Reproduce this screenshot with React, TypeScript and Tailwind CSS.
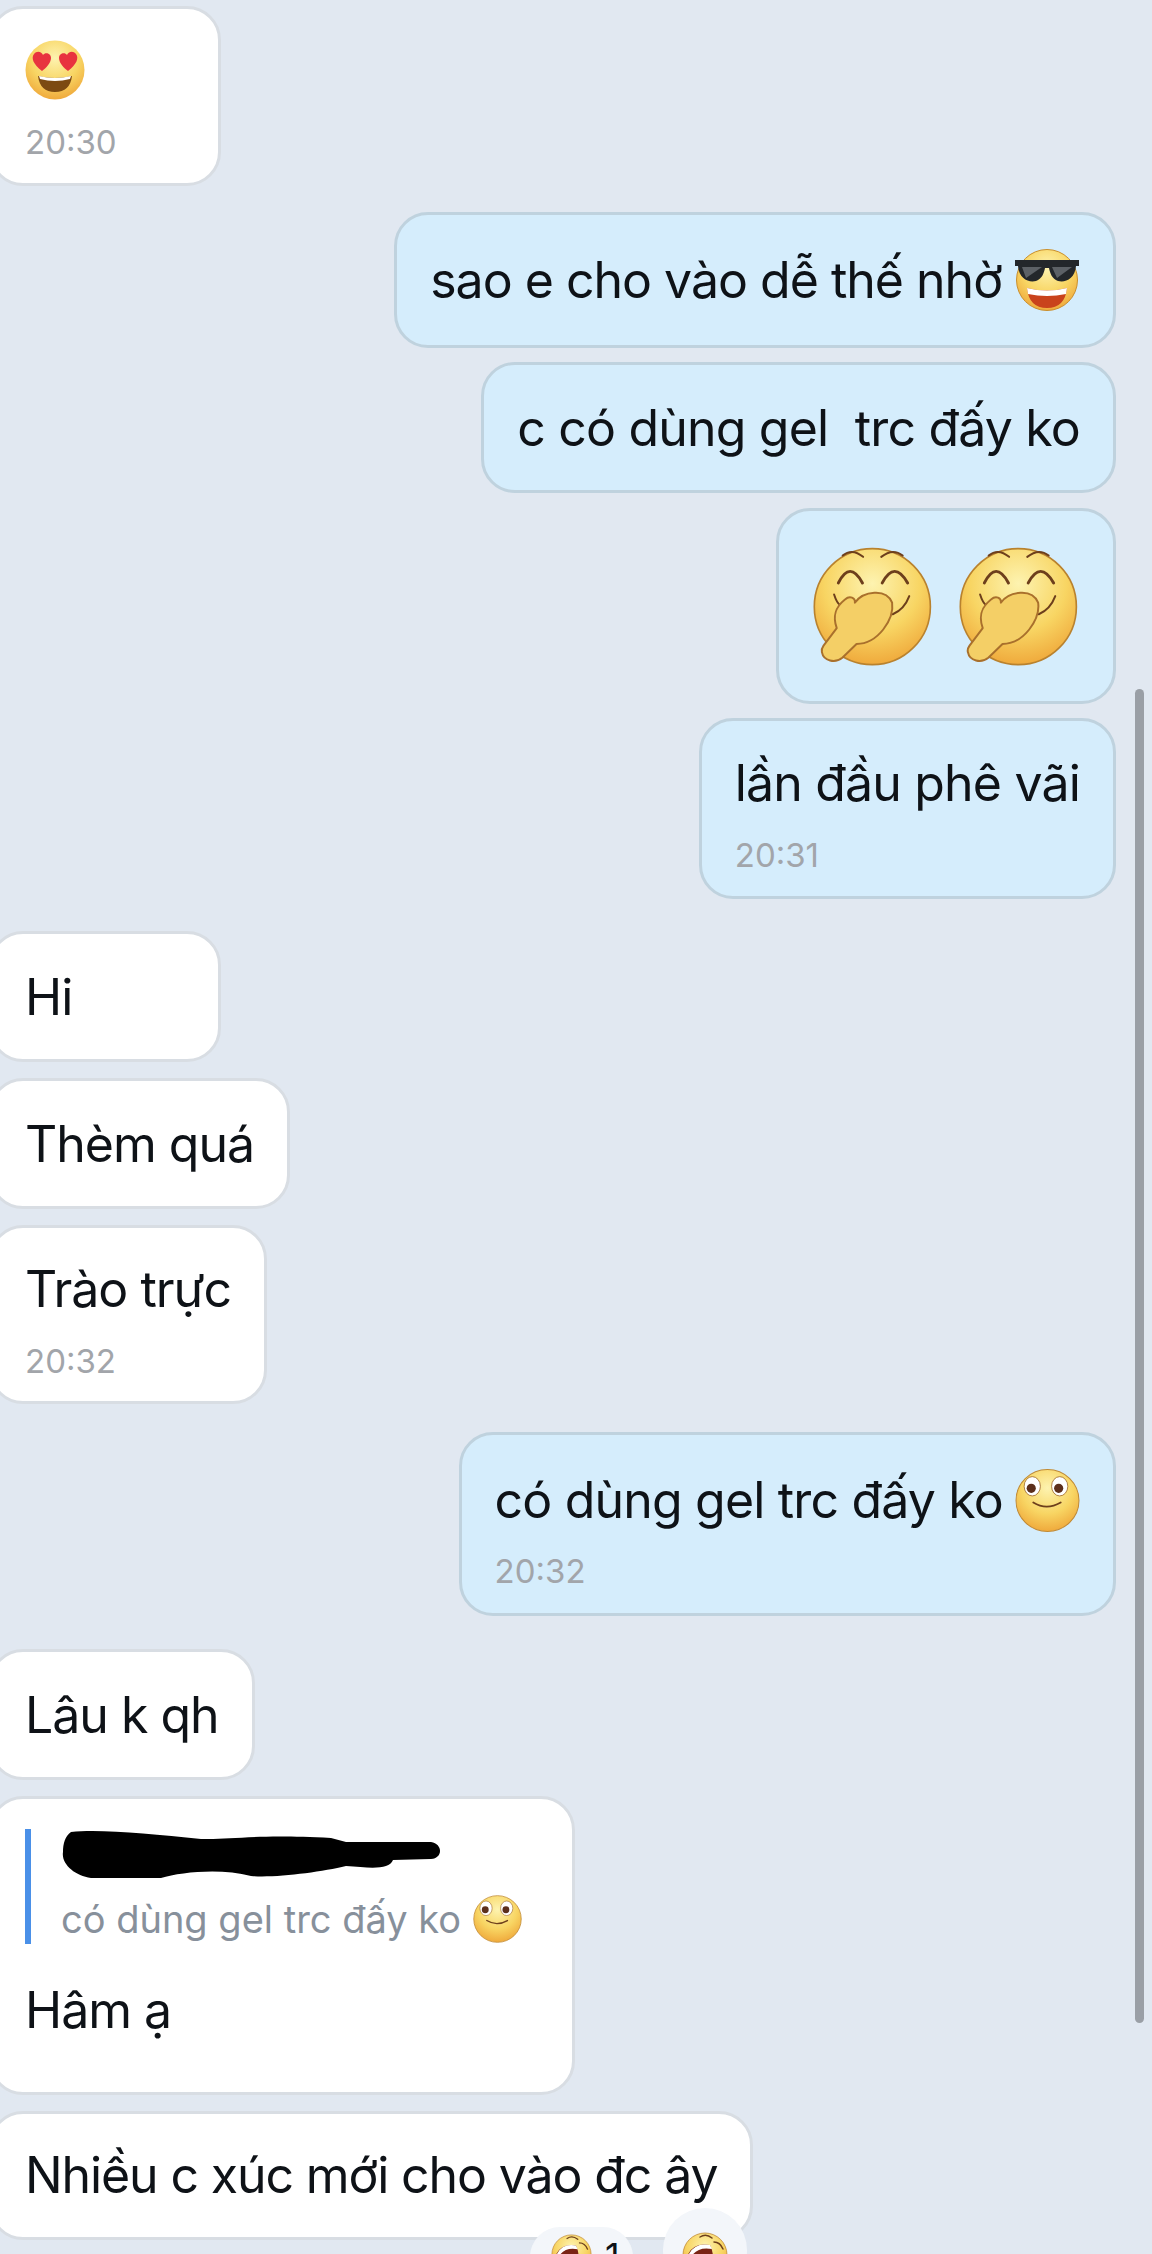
import React from 'react';

function FaceDefs({ id }: { id: string }) {
  return (
    <defs>
      <radialGradient id={id} cx="50%" cy="30%" r="75%">
        <stop offset="0%" stopColor="#fdf3b0" />
        <stop offset="55%" stopColor="#f8d563" />
        <stop offset="100%" stopColor="#eea235" />
      </radialGradient>
    </defs>
  );
}

function HeartEyes() {
  return (
    <svg viewBox="0 0 60 60" className="w-[60px] h-[60px]">
      <FaceDefs id="heartFace" />
      <circle cx="30" cy="30" r="29.5" fill="url(#heartFace)" />
      <path d="M13 36 Q30 40 47 36 Q45 52 30 52 Q15 52 13 36Z" fill="#7c4a12" />
      <path d="M14 36 Q30 40 46 36 L45 39 Q30 43 15 39Z" fill="#fff" />
      <path d="M17 31 C8 24 6 18 9 14 C12 10 17 12 18 15 C20 12 26 13 26 18 C26 23 21 28 17 31Z" fill="#e8333f" />
      <path d="M43 31 C39 28 34 23 34 18 C34 13 40 12 42 15 C43 12 48 10 51 14 C54 18 52 24 43 31Z" fill="#e8333f" />
    </svg>
  );
}

function CoolFace() {
  return (
    <svg viewBox="0 0 66 66" className="w-[66px] h-[66px] shrink-0">
      <FaceDefs id="coolFace" />
      <circle cx="33" cy="33" r="30.5" fill="url(#coolFace)" stroke="#c98f2e" strokeWidth="1" />
      <path d="M13 41 Q33 46 53 41 Q51 61 33 61 Q15 61 13 41Z" fill="#c9431c" />
      <path d="M13 41 Q33 46 53 41 L52 47 Q33 51 14 47Z" fill="#fff" />
      <path d="M1 13 H65 V19 H62 C61 32 51 36 44 34 C38 32 36 26 35 21 H31 C30 26 28 32 22 34 C15 36 5 32 4 19 H1Z" fill="#23272b" />
      <path d="M8 20 H28 L12 31Z M38 20 H58 L43 31Z" fill="#5c6166" />
    </svg>
  );
}

function CoverFace() {
  return (
    <svg viewBox="90 40 370 370" className="w-[122px] h-[122px] shrink-0">
      <FaceDefs id="coverFace" />
      <circle cx="273" cy="227" r="176" fill="url(#coverFace)" stroke="#b9822e" strokeWidth="5" />
      <g fill="none" stroke="#6d3f1c" strokeLinecap="round">
        <path d="M183 72 Q212 48 245 76" strokeWidth="6" />
        <path d="M300 76 Q335 48 365 72" strokeWidth="6" />
        <path d="M170 155 Q205 85 243 155" strokeWidth="9" />
        <path d="M303 155 Q340 85 380 155" strokeWidth="9" />
        <path d="M157 190 Q165 215 175 222" strokeWidth="6" />
        <path d="M385 195 Q370 235 335 250" strokeWidth="6" />
      </g>
      <path
        d="M125 345 L165 292 C150 250 165 225 190 205 C205 192 222 200 220 215 C245 180 315 170 333 215 C340 265 290 340 225 340 L182 382 C160 400 125 392 120 365 C118 357 120 352 125 345Z"
        fill="#f4cf66"
        stroke="#a9702c"
        strokeWidth="6"
        strokeLinejoin="round"
      />
    </svg>
  );
}

function RoundFace({ size }: { size: 'lg' | 'sm' }) {
  return (
    <svg viewBox="0 0 64 62" className={size === 'lg' ? 'w-[65px] h-[63px] shrink-0' : 'w-[49px] h-[50px] shrink-0'}>
      <FaceDefs id="roundFace" />
      <ellipse cx="32" cy="31" rx="31" ry="30.5" fill="url(#roundFace)" stroke="#c08a35" strokeWidth="1" />
      <ellipse cx="17" cy="17" rx="8" ry="9.5" fill="#fff" stroke="#a06a2a" strokeWidth="0.8" />
      <ellipse cx="44" cy="17" rx="8" ry="9.5" fill="#fff" stroke="#a06a2a" strokeWidth="0.8" />
      <circle cx="16" cy="19" r="4.5" fill="#5c2f1c" />
      <circle cx="43" cy="19" r="4.5" fill="#5c2f1c" />
      <path d="M18 33 Q31 41 45 33" fill="none" stroke="#6d3f1c" strokeWidth="1.8" strokeLinecap="round" />
    </svg>
  );
}

function LaughFace({ size }: { size: number }) {
  return (
    <svg viewBox="0 0 46 46" width={size} height={size} className="shrink-0">
      <FaceDefs id="laughFace" />
      <circle cx="23" cy="23" r="22" fill="url(#laughFace)" stroke="#c08a35" strokeWidth="0.8" />
      <path d="M18 5 Q24 1 30 6 M32 10 Q38 10 41 17" fill="none" stroke="#6d3f1c" strokeWidth="1.5" strokeLinecap="round" />
      <path d="M5 25 Q10 10 28 13 Q36 30 22 42 Q8 40 5 25Z" fill="#7a2415" />
      <path d="M6 24 Q12 10 28 13 L30 17 Q14 14 8 27Z" fill="#fff" />
    </svg>
  );
}

function Time({ children, className = 'mt-[22px]' }: { children: string; className?: string }) {
  return <div className={`${className} h-[40px] text-[33px] leading-[40px] tracking-normal text-[#a2a5aa]`}>{children}</div>;
}

function Left({ children, className = '' }: { children: React.ReactNode; className?: string }) {
  return (
    <div className={`self-start -ml-[11px] pl-[33px] pr-[33px] pt-[33px] pb-[32px] bg-white border-[3px] border-[#d8dde3] rounded-[34px] text-[#0e1217] ${className}`}>
      {children}
    </div>
  );
}

function Right({ children, className = '' }: { children: React.ReactNode; className?: string }) {
  return (
    <div className={`self-end mr-[36px] px-[33px] pt-[33px] pb-[32px] bg-[#d5edfc] border-[3px] border-[#bfd2de] rounded-[34px] text-[#0e1217] tracking-[-0.82px] ${className}`}>
      {children}
    </div>
  );
}

export default function App() {
  return (
    <div
      className="relative h-[2254px] overflow-hidden bg-[#e1e8f1] flex flex-col pt-[6px] text-[50px] leading-[60px] tracking-[-1px]"
      style={{ fontFamily: '"Inter", "Liberation Sans", sans-serif' }}
    >
      {/* Scrollbar */}
      <div className="absolute left-[1135px] top-[689px] w-[9px] h-[1334px] rounded-full bg-[#9a9fa6]" />

      <Left className="w-[232px] !pt-[31px] !pb-[21px]">
        <HeartEyes />
        <Time>20:30</Time>
      </Left>

      <Right className="mt-[26px] !pt-[32px] !pb-[32px] !tracking-[-1px]">
        <div className="flex items-center gap-[12px]">
          <span>sao e cho vào dễ thế nhờ</span>
          <CoolFace />
        </div>
      </Right>

      <Right className="mt-[14px]">
        <span className="whitespace-pre">c có dùng gel  trc đấy ko</span>
      </Right>

      <Right className="mt-[15px] !pt-[34px] !pb-[34px]">
        <div className="flex gap-[24px]">
          <CoverFace />
          <CoverFace />
        </div>
      </Right>

      <Right className="mt-[14px] !pt-[32px] !pb-[21px]">
        <div>lần đầu phê vãi</div>
        <Time>20:31</Time>
      </Right>

      <Left className="mt-[32px] w-[232px]">Hi</Left>
      <Left className="mt-[16px]">Thèm quá</Left>
      <Left className="mt-[16px] !pt-[31px] !pb-[20px]">
        <div>Trào trực</div>
        <Time>20:32</Time>
      </Left>

      <Right className="mt-[28px] !pt-[32px] !pb-[22px]">
        <div className="flex items-center gap-[12px] h-[66px]">
          <span>có dùng gel trc đấy ko</span>
          <RoundFace size="lg" />
        </div>
        <Time className="mt-[18px]">20:32</Time>
      </Right>

      <Left className="mt-[33px]">Lâu k qh</Left>

      <Left className="mt-[16px] w-[586px] !pt-[30px] !pb-[52px]">
        <div className="border-l-[6px] border-[#4a90e8] pl-[30px] h-[115px] flex flex-col">
          <svg viewBox="0 0 380 50" className="w-[380px] h-[50px] mt-[1px] -mb-[1px]">
            <path
              d="M10 2 C40 -1 90 4 140 9 C170 10 190 4 270 8 L285 12 L370 12 C382 14 382 28 370 29 L332 30 C328 40 310 38 285 36 C260 42 215 48 190 46 C160 38 120 42 100 48 L30 48 C14 46 0 34 2 22 C2 14 4 6 10 2Z"
              fill="#000"
            />
          </svg>
          <div className="mt-auto flex items-center gap-[12px] text-[38px] leading-[50px] text-[#87909b] tracking-normal">
            <span>có dùng gel trc đấy ko</span>
            <RoundFace size="sm" />
          </div>
        </div>
        <div className="mt-[36px]">Hâm ạ</div>
      </Left>

      <Left className="mt-[16px] !pt-[31px] !pb-[32px] !tracking-[-1.12px]">Nhiều c xúc mới cho vào đc ây</Left>

      {/* Reactions */}
      <div className="absolute left-[530px] top-[2227px] w-[103px] h-[60px] rounded-[30px] bg-[#f3f6fa] flex items-start gap-[13px] pl-[21px] pt-[7px] text-[36px] leading-[44px] text-[#0e1217] tracking-normal">
        <LaughFace size={41} />
        <span>1</span>
      </div>
      <div className="absolute left-[663px] top-[2208px] w-[84px] h-[84px] rounded-full bg-[#f3f6fa] flex justify-center pt-[24px]">
        <LaughFace size={46} />
      </div>
    </div>
  );
}
